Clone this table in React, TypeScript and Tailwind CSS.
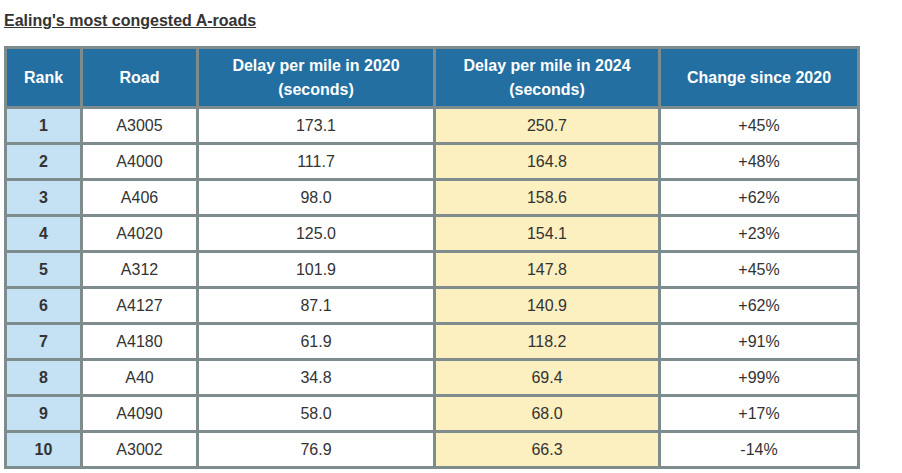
const rows = [
  { rank: 1, road: "A3005", y2020: "173.1", y2024: "250.7", change: "+45%" },
  { rank: 2, road: "A4000", y2020: "111.7", y2024: "164.8", change: "+48%" },
  { rank: 3, road: "A406", y2020: "98.0", y2024: "158.6", change: "+62%" },
  { rank: 4, road: "A4020", y2020: "125.0", y2024: "154.1", change: "+23%" },
  { rank: 5, road: "A312", y2020: "101.9", y2024: "147.8", change: "+45%" },
  { rank: 6, road: "A4127", y2020: "87.1", y2024: "140.9", change: "+62%" },
  { rank: 7, road: "A4180", y2020: "61.9", y2024: "118.2", change: "+91%" },
  { rank: 8, road: "A40", y2020: "34.8", y2024: "69.4", change: "+99%" },
  { rank: 9, road: "A4090", y2020: "58.0", y2024: "68.0", change: "+17%" },
  { rank: 10, road: "A3002", y2020: "76.9", y2024: "66.3", change: "-14%" },
]

export default function App() {
  return (
    <div className="min-h-screen bg-white px-[4px] font-['Liberation_Sans',Arial,sans-serif] text-[#333]">
      <h1 className="pt-[9px] text-[16px] font-bold leading-[24px] underline">
        Ealing's most congested A-roads
      </h1>

      <div className="mt-[13px] grid w-[856px] grid-cols-[73px_113px_234px_222px_196px] gap-[3px] bg-[#7f8c8d] p-[3px] text-center text-[16px]">
        <div className="flex h-[57px] items-center justify-center bg-[#236fa1] pt-[1px] font-bold leading-[24px] text-white">Rank</div>
        <div className="flex h-[57px] items-center justify-center bg-[#236fa1] pt-[1px] font-bold leading-[24px] text-white">Road</div>
        <div className="flex h-[57px] items-center justify-center bg-[#236fa1] pt-[1px] font-bold leading-[24px] text-white">
          Delay per mile in 2020
          <br />
          (seconds)
        </div>
        <div className="flex h-[57px] items-center justify-center bg-[#236fa1] pt-[1px] font-bold leading-[24px] text-white">
          Delay per mile in 2024
          <br />
          (seconds)
        </div>
        <div className="flex h-[57px] items-center justify-center bg-[#236fa1] pt-[1px] font-bold leading-[24px] text-white">Change since 2020</div>

        {rows.map((r) => (
          <div key={r.rank} className="contents">
            <div className="flex h-[33px] items-center justify-center bg-[#c5e1f4] font-bold">{r.rank}</div>
            <div className="flex h-[33px] items-center justify-center bg-white">{r.road}</div>
            <div className="flex h-[33px] items-center justify-center bg-white">{r.y2020}</div>
            <div className="flex h-[33px] items-center justify-center bg-[#fcefc0]">{r.y2024}</div>
            <div className="flex h-[33px] items-center justify-center bg-white">{r.change}</div>
          </div>
        ))}
      </div>
    </div>
  )
}
